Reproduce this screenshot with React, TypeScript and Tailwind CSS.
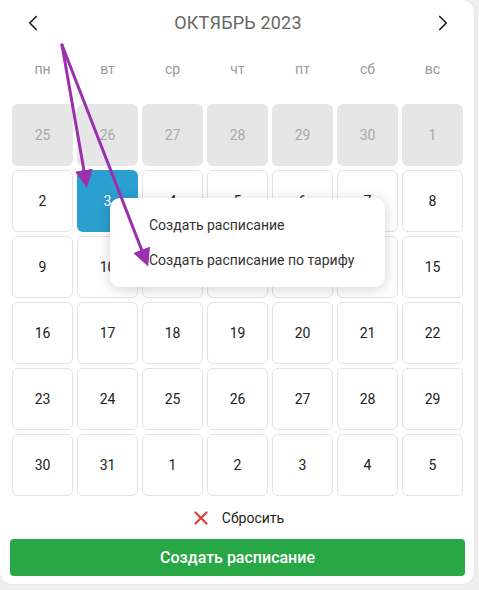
import React from 'react';
import { ChevronLeft, ChevronRight, X } from 'lucide-react';

const weekdays = ['пн', 'вт', 'ср', 'чт', 'пт', 'сб', 'вс'];

// september tail, october, november head
const days: { day: number; kind: 'off' | 'sel' | 'day' }[] = [
  ...[25, 26, 27, 28, 29, 30, 1].map((d) => ({ day: d, kind: 'off' as const })),
  ...Array.from({ length: 30 }, (_, i) => ({ day: i + 2, kind: i + 2 === 3 ? ('sel' as const) : ('day' as const) })),
  ...[1, 2, 3, 4, 5].map((d) => ({ day: d, kind: 'day' as const })),
];

const App = () => {
  return (
    <div className="w-[479px] h-[590px] bg-[#eeeeee] font-['Roboto',sans-serif]">
      <div className="relative w-[474px] h-[584px] bg-white rounded-b-[12px] rounded-tr-[12px] shadow-[0_0_3px_rgba(0,0,0,0.08)] flex flex-col">
        {/* Header */}
        <div className="h-[45px] flex items-center justify-between pl-[20px] pr-[18px]">
          <ChevronLeft className="w-[26px] h-[26px] text-[#222]" strokeWidth={1.6} />
          <div className="text-[18px] text-[#666] tracking-[0.2px]">ОКТЯБРЬ 2023</div>
          <ChevronRight className="w-[26px] h-[26px] text-[#222]" strokeWidth={1.6} />
        </div>

        {/* Weekdays */}
        <div className="grid grid-cols-7 gap-x-[4px] pl-[12px] pr-[11px] h-[48px] items-center">
          {weekdays.map((w) => (
            <div key={w} className="text-center text-[14px] text-[#999]">
              {w}
            </div>
          ))}
        </div>

        {/* Days grid */}
        <div className="grid grid-cols-7 gap-x-[4px] gap-y-[4px] pl-[12px] pr-[11px] mt-[11px]">
          {days.map((c, i) => (
            <div
              key={i}
              className={
                'h-[62px] rounded-[6px] flex items-center justify-center text-[14px] ' +
                (c.kind === 'off'
                  ? 'bg-[#e6e6e6] text-[#a8a8a8]'
                  : c.kind === 'sel'
                  ? 'bg-[#2b9fd0] text-white'
                  : 'bg-white border border-[#e4e4e4] text-[#222]')
              }
            >
              {c.day}
            </div>
          ))}
        </div>

        {/* Reset */}
        <div className="flex items-center justify-center gap-[10px] mt-[12px] h-[20px]">
          <X className="w-[22px] h-[22px] text-[#e0403a]" strokeWidth={2.4} />
          <span className="text-[14px] text-[#222]">Сбросить</span>
        </div>

        {/* Submit */}
        <button className="mt-[11px] ml-[10px] w-[455px] h-[37px] bg-[#28a745] rounded-[4px] text-white text-[16px] font-medium">
          Создать расписание
        </button>

        {/* Context menu */}
        <div className="absolute left-[110px] top-[198px] w-[275px] h-[89px] bg-white rounded-[10px] shadow-[0_2px_14px_rgba(0,0,0,0.18)] flex flex-col justify-center pl-[39px] gap-[14px] text-[14px] text-[#333]">
          <div>Создать расписание</div>
          <div>Создать расписание по тарифу</div>
        </div>

        {/* Annotation arrows */}
        <svg className="absolute left-0 top-0 pointer-events-none" width="474" height="584">
          <defs>
            <marker id="ah" markerWidth="6" markerHeight="6" refX="4" refY="3" orient="auto" markerUnits="strokeWidth">
              <path d="M0,0 L6,3 L0,6 Z" fill="#9b2fae" />
            </marker>
          </defs>
          <line x1="62" y1="45" x2="86" y2="182" stroke="#9b2fae" strokeWidth="3" strokeLinecap="round" markerEnd="url(#ah)" />
          <line x1="62" y1="45" x2="146" y2="261" stroke="#9b2fae" strokeWidth="3" strokeLinecap="round" markerEnd="url(#ah)" />
        </svg>
      </div>
    </div>
  );
};

export default App;
